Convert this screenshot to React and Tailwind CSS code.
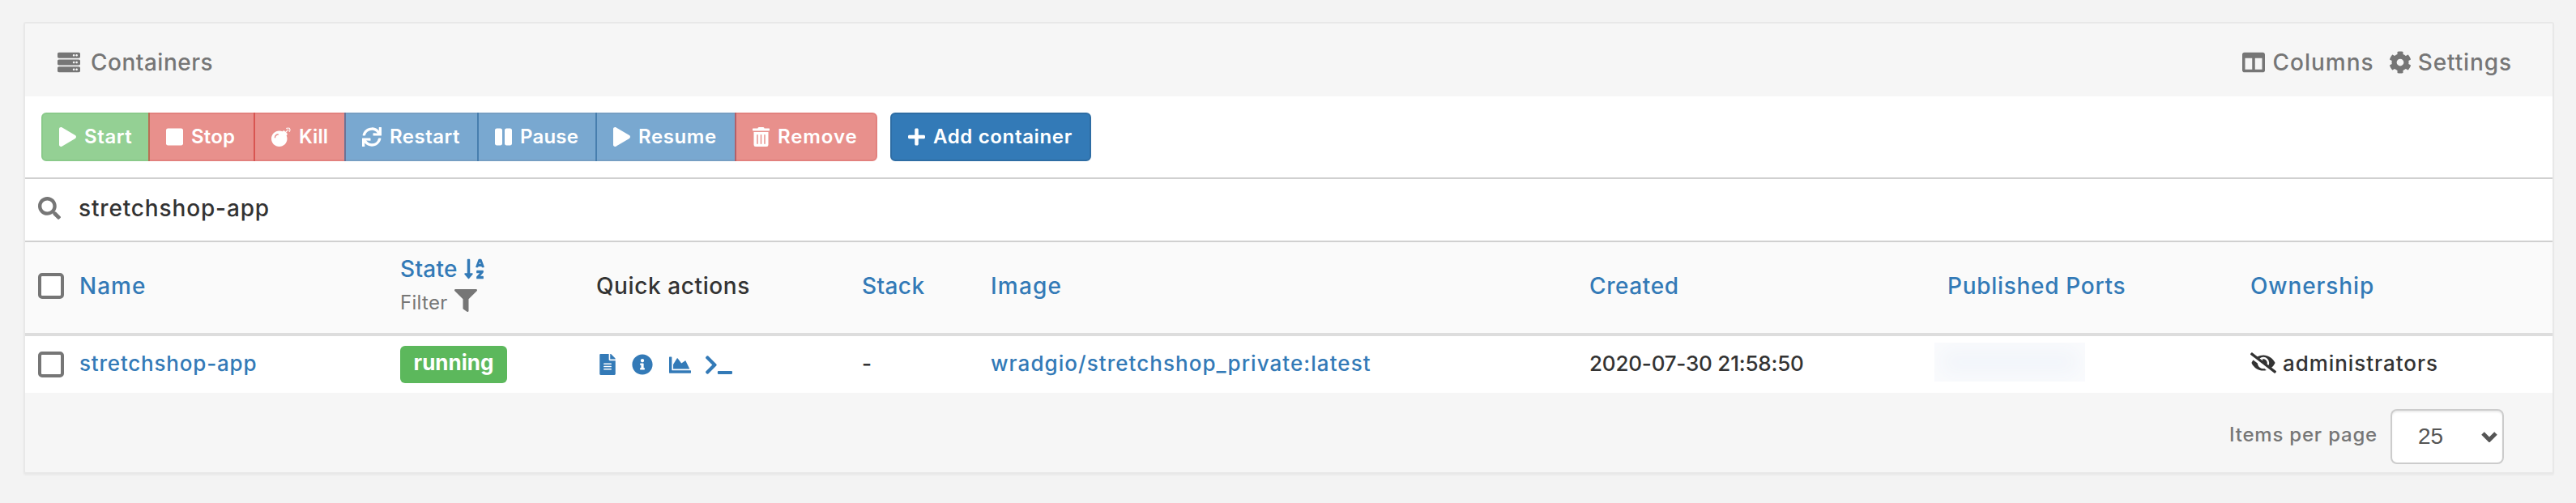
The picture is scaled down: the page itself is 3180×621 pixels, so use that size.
import {
  FaBomb,
  FaChartArea,
  FaCog,
  FaColumns,
  FaEyeSlash,
  FaFileAlt,
  FaFilter,
  FaInfoCircle,
  FaPause,
  FaPlay,
  FaPlus,
  FaSearch,
  FaServer,
  FaSortAlphaDown,
  FaStop,
  FaSync,
  FaTerminal,
  FaTrashAlt,
} from "react-icons/fa";

const green = "bg-[#5cb85c] border-[#4cae4c]";
const red = "bg-[#dd5650] border-[#d43f3a]";
const blue = "bg-[#337ab7] border-[#2e6da4]";

const actions = [
  { label: "Start", icon: FaPlay, iconSize: "w-[21px]", color: green, size: "w-[134px] rounded-l-md", text: "tracking-[0.6px]" },
  { label: "Stop", icon: FaStop, iconSize: "w-[21px]", color: red, size: "w-[132px] -ml-0.5", text: "tracking-[0.2px]" },
  { label: "Kill", icon: FaBomb, iconSize: "w-6", color: red, size: "w-[114px] -ml-0.5", text: "tracking-[0px]" },
  { label: "Restart", icon: FaSync, iconSize: "w-6", color: blue, size: "w-[166px] -ml-0.5", text: "tracking-[0.5px]" },
  { label: "Pause", icon: FaPause, iconSize: "w-[21px]", color: blue, size: "w-[148px] -ml-0.5", text: "tracking-[0.2px]" },
  { label: "Resume", icon: FaPlay, iconSize: "w-[21px]", color: blue, size: "w-[174px] -ml-0.5", text: "tracking-[0.6px]" },
  { label: "Remove", icon: FaTrashAlt, iconSize: "w-[21px]", color: red, size: "w-[176px] -ml-0.5 rounded-r-md", text: "tracking-[0.9px]" },
];

const grid = "grid grid-cols-[67px_396px_242px_328px_159px_739px_442px_374px_1fr] items-center";

function ActionButton({ action }) {
  const Icon = action.icon;
  return (
    <button
      className={`flex h-[60px] items-center border-2 pl-5 text-[24px] font-semibold text-white opacity-65 ${action.color} ${action.size}`}
    >
      <Icon className={`mr-[10px] h-6 shrink-0 ${action.iconSize}`} />
      <span className={action.text}>{action.label}</span>
    </button>
  );
}

function Checkbox() {
  return <span className="ml-4 block h-8 w-8 rounded-[5px] border-4 border-[#767676] bg-white" />;
}

function Toolbar() {
  return (
    <div className="flex h-[100px] items-center bg-white pl-5">
      <div className="flex">
        {actions.map((action) => (
          <ActionButton key={action.label} action={action} />
        ))}
      </div>
      <button
        className={`ml-4 flex h-[60px] w-[248px] items-center rounded-md border-2 pl-5 text-[24px] font-semibold text-white ${blue}`}
      >
        <FaPlus className="mr-[10px] h-6 w-[21px]" />
        <span className="tracking-[0.65px]">Add container</span>
      </button>
    </div>
  );
}

function TableHead() {
  return (
    <div className={`${grid} h-[116px] border-b-4 border-[#ddd] bg-[#fafafa] pb-1 text-[28px] text-[#337ab7]`}>
      <Checkbox />
      <span className="tracking-[1px]">Name</span>
      <div className="flex flex-col">
        <span className="flex h-[42px] items-center gap-2 tracking-[0.3px]">
          State
          <FaSortAlphaDown className="h-7 w-[25px]" />
        </span>
        <span className="flex h-[42px] items-center gap-2 text-[24px] font-normal tracking-[0.3px] text-[#767676]">
          Filter
          <FaFilter className="mb-1.5 h-7 w-7" />
        </span>
      </div>
      <span className="tracking-[0.6px] text-[#333]">Quick actions</span>
      <span className="tracking-[0.4px]">Stack</span>
      <span className="tracking-[1.2px]">Image</span>
      <span className="tracking-[0.6px]">Created</span>
      <span className="tracking-[0.7px]">Published Ports</span>
      <span className="tracking-[0.9px]">Ownership</span>
    </div>
  );
}

function TableRow() {
  return (
    <div className={`${grid} h-[70px] bg-white text-[26px] text-[#333]`}>
      <Checkbox />
      <span className="pb-1 tracking-[0.8px] text-[#337ab7]">stretchshop-app</span>
      <div>
        <span className="flex h-[46px] w-[132px] items-center justify-center rounded-md bg-[#5cb85c] pb-1.5 font-bold text-white">
          running
        </span>
      </div>
      <div className="flex items-center pl-1 text-[#337ab7]">
        <FaFileAlt className="mr-5 h-[26px] w-5" />
        <FaInfoCircle className="mr-5 h-[26px] w-[26px]" />
        <FaChartArea className="mr-[18px] h-[27px] w-[27px]" />
        <FaTerminal className="h-[27px] w-[33px]" />
      </div>
      <span className="pb-1">-</span>
      <span className="pb-1 tracking-[1.05px] text-[#337ab7]">wradgio/stretchshop_private:latest</span>
      <span className="pb-1 tracking-[-0.2px]">2020-07-30 21:58:50</span>
      <span className="-mt-1.5 -ml-4 h-12 w-[186px] bg-[#f2f5fa] shadow-[inset_0_0_24px_8px_#fafbfd]" />
      <span className="flex items-center gap-2 pb-1 tracking-[0.95px]">
        <FaEyeSlash className="h-[26px] w-8" />
        administrators
      </span>
    </div>
  );
}

export default function App() {
  return (
    <main className="h-[621px] w-[3180px] bg-[#f3f3f3] px-[29px] pt-[27px] font-['Inter',sans-serif] font-medium">
      <section className="w-[3124px] rounded-[3px] border-2 border-[#e8e8e8] bg-[#f6f6f6] shadow-[0_2px_2px_rgba(0,0,0,0.04)]">
        <header className="flex h-[90px] items-center justify-between pt-[5px] pr-[50px] pl-10 text-[28px] text-[#767676]">
          <div className="flex items-center gap-[13px]">
            <FaServer className="h-7 w-7" />
            <span className="tracking-[0.5px]">Containers</span>
          </div>
          <div className="flex items-center">
            <FaColumns className="mr-[10px] h-7 w-7" />
            <span className="tracking-[1px]">Columns</span>
            <FaCog className="mr-2 ml-[18px] h-7 w-7" />
            <span className="tracking-[0.9px]">Settings</span>
          </div>
        </header>
        <Toolbar />
        <div className="flex h-20 items-center border-y-2 border-[#d0d0d0] bg-white pb-1 pl-4">
          <FaSearch className="mr-[22px] h-7 w-7 text-[#767676]" />
          <span className="text-[28px] tracking-[0.85px] text-[#333]">stretchshop-app</span>
        </div>
        <TableHead />
        <TableRow />
        <footer className="flex h-[98px] items-center justify-end pt-[10px] pr-[60px]">
          <span className="mr-4 pb-1 text-[24px] tracking-[0.8px] text-[#767676]">Items per page</span>
          <div className="flex h-[68px] w-[140px] items-center justify-between rounded-lg border-2 border-[#ccc] bg-white pr-[6px] pl-8 text-[28px] text-[#555] shadow-[inset_0_2px_2px_rgba(0,0,0,0.075)]">
            <span className="font-['Liberation_Sans',sans-serif] font-normal">25</span>
            <svg className="h-[13px] w-5" viewBox="0 0 20 13" fill="none" stroke="#555" strokeWidth="5">
              <path d="M2 2l8 8 8-8" />
            </svg>
          </div>
        </footer>
      </section>
    </main>
  );
}
